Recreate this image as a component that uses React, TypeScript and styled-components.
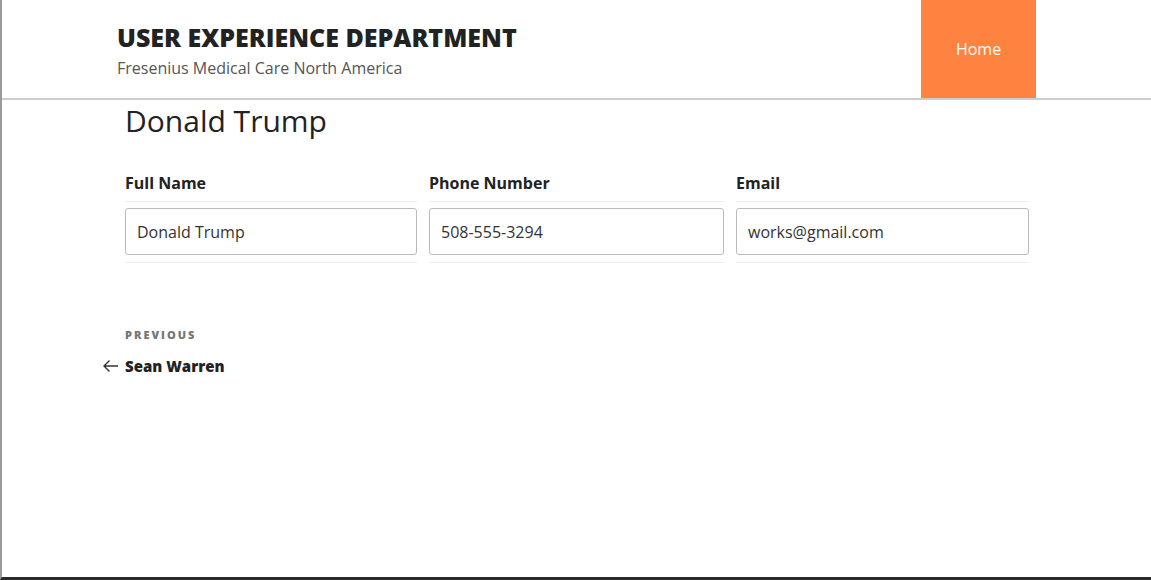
import React from "react";
import styled, { createGlobalStyle } from "styled-components";

const Global = createGlobalStyle`
  html, body { margin: 0; padding: 0; background: #fff; }
  body { font-family: "Open Sans", "Noto Sans", sans-serif; color: #222; }
  * { box-sizing: border-box; }
`;

const Frame = styled.div`
  width: 1151px;
  height: 580px;
  display: flex;
  flex-direction: column;
  border-left: 2px solid #9a9a9a;
  border-bottom: 3px solid #2a2a2a;
  overflow: hidden;
`;

const Header = styled.header`
  height: 100px;
  display: flex;
  border-bottom: 2px solid #cccccc;
  padding-left: 115px;
`;

const Branding = styled.div`
  flex: 1;
  display: flex;
  flex-direction: column;
  padding-top: 20px;
`;

const SiteTitle = styled.div`
  font-size: 25px;
  font-weight: 800;
  line-height: 34px;
  color: #222;
`;

const Tagline = styled.div`
  font-size: 16px;
  line-height: 24px;
  color: #555;
  margin-top: 2px;
`;

const Nav = styled.nav`
  display: flex;
  margin-right: 115px;
`;

const NavItem = styled.a`
  width: 115px;
  height: 98px;
  background: #ff8340;
  color: #fff;
  font-size: 16px;
  display: flex;
  align-items: center;
  justify-content: center;
  text-decoration: none;
`;

const Main = styled.main`
  padding-left: 121px;
  width: 1029px;
  display: flex;
  flex-direction: column;
`;

const Title = styled.h1`
  margin: 0;
  font-size: 30px;
  font-weight: 400;
  line-height: 44px;
  color: #222;
  padding-left: 2px;
  margin-top: -1px;
`;

const Table = styled.div`
  margin-top: 28px;
  margin-left: 2px;
  display: grid;
  grid-template-columns: 292px 295px 293px;
  column-gap: 12px;
`;

const HeadCell = styled.div`
  font-size: 16px;
  font-weight: 700;
  line-height: 24px;
  padding-bottom: 6px;
  border-bottom: 1px solid #eeeeee;
`;

const BodyCell = styled.div`
  padding: 6px 0 7px;
  border-bottom: 1px solid #eeeeee;
`;

const Field = styled.input`
  width: 100%;
  height: 47px;
  border: 1px solid #bbbbbb;
  border-radius: 3px;
  padding: 0 11px;
  font-family: "Open Sans", "Noto Sans", sans-serif;
  font-size: 16px;
  color: #333;
  background: #fff;
  outline: none;
`;

const PostNav = styled.div`
  margin-top: 64px;
  padding-left: 2px;
  display: flex;
  flex-direction: column;
`;

const MetaNav = styled.span`
  font-size: 11px;
  font-weight: 800;
  letter-spacing: 2px;
  color: #767676;
  text-transform: uppercase;
  line-height: 16px;
`;

const PrevLink = styled.a`
  margin-top: 13px;
  margin-left: -23px;
  display: flex;
  align-items: center;
  gap: 6px;
  font-size: 15px;
  font-weight: 800;
  color: #222;
  text-decoration: none;
  line-height: 20px;
`;

const Arrow = () => (
  <svg width="17" height="14" viewBox="0 0 17 14" fill="none">
    <path d="M16 7H2M7.5 1.5L2 7l5.5 5.5" stroke="#333" strokeWidth="1.4" />
  </svg>
);

export default function App() {
  return (
    <>
      <Global />
      <Frame>
        <Header>
          <Branding>
            <SiteTitle>USER EXPERIENCE DEPARTMENT</SiteTitle>
            <Tagline>Fresenius Medical Care North America</Tagline>
          </Branding>
          <Nav>
            <NavItem href="#">Home</NavItem>
          </Nav>
        </Header>
        <Main>
          <Title>Donald Trump</Title>
          <Table>
            <HeadCell>Full Name</HeadCell>
            <HeadCell>Phone Number</HeadCell>
            <HeadCell>Email</HeadCell>
            <BodyCell><Field readOnly value="Donald Trump" /></BodyCell>
            <BodyCell><Field readOnly value="508-555-3294" /></BodyCell>
            <BodyCell><Field readOnly value="works@gmail.com" /></BodyCell>
          </Table>
          <PostNav>
            <MetaNav>Previous</MetaNav>
            <PrevLink href="#"><Arrow />Sean Warren</PrevLink>
          </PostNav>
        </Main>
      </Frame>
    </>
  );
}
